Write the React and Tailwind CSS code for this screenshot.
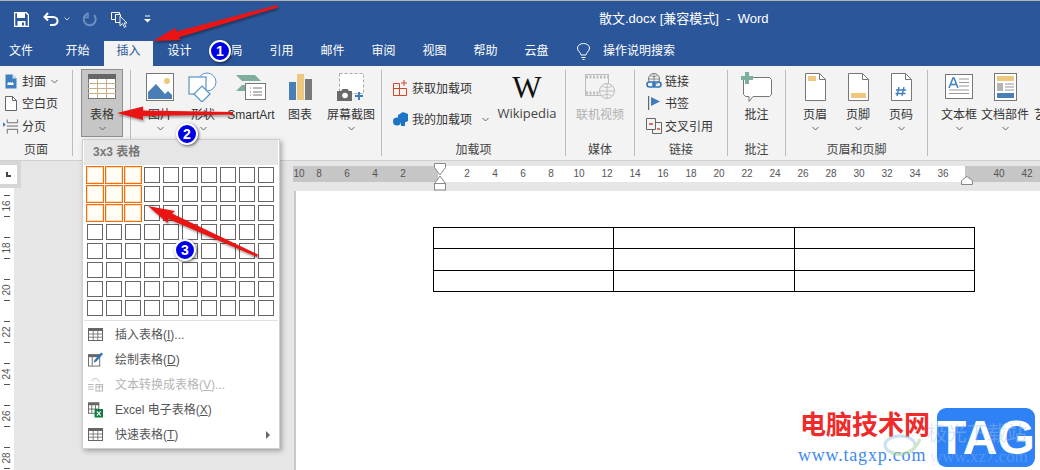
import React from "react";

const FONT = "font-['Liberation_Sans','Noto_Sans_CJK_SC',sans-serif]";

const Chev = ({ color = "#666" }) => (
  <svg width="7" height="5" viewBox="0 0 7 5"><path d="M0.5 1 L3.5 4 L6.5 1" fill="none" stroke={color} strokeWidth="1" /></svg>
);

const GridIcon = ({ w = 15, h = 13, color = "#666" }) => (
  <svg width={w} height={h} viewBox="0 0 15 13">
    <rect x="0.5" y="0.5" width="14" height="12" fill="#fff" stroke={color} />
    <rect x="0" y="0" width="15" height="3" fill={color} />
    <path d="M5.2 3v9M9.8 3v9M0 6h15M0 9.2h15" stroke={color} strokeWidth="0.8" />
  </svg>
);

const icons = {
  cover: (
    <svg width="12" height="15" viewBox="0 0 12 15"><path d="M.5.5h7l4 4v10h-11z" fill="#3f7fbf" /><path d="M7.5.5v4h4z" fill="#cfe0f0" /><path d="M2.5 9l1-1 1 1 1-1 1 1 1-1 1 1v2h-6z" fill="#fff" /></svg>
  ),
  blank: (
    <svg width="12" height="15" viewBox="0 0 12 15"><path d="M.5.5h7l4 4v10h-11z" fill="#fff" stroke="#666" /><path d="M7.5.5v4h4" fill="none" stroke="#666" /></svg>
  ),
  pagebreak: (
    <svg width="17" height="15" viewBox="0 0 17 15"><path d="M0 3l3 2.5L0 8z" fill="#3f7fbf" /><path d="M4.500 0v3.500h11V0M4.500 15v-4.500h11V15" fill="none" stroke="#666" /><path d="M4 7h12" stroke="#666" /></svg>
  ),
  table: (
    <svg width="28" height="25" viewBox="0 0 28 25"><rect x=".5" y=".5" width="27" height="24" fill="#fff" stroke="#777" /><rect width="28" height="5" fill="#666" /><path d="M9.500 5v19M18.500 5v19M0 9.500h28M0 14.500h28M0 19.500h28" stroke="#c9b08a" strokeWidth="1" /></svg>
  ),
  picture: (
    <svg width="28" height="28" viewBox="0 0 28 28"><rect x=".5" y=".5" width="27" height="27" fill="#fff" stroke="#777" /><circle cx="21" cy="8" r="3" fill="#edc87e" /><path d="M2 26V19l8-8 9 10 3-3 4 4v4z" fill="#4a7fb5" /></svg>
  ),
  shapes: (
    <svg width="30" height="30" viewBox="0 0 30 30"><circle cx="19" cy="10" r="9" fill="#fff" stroke="#5b93c7" /><rect x="1" y="5" width="17" height="17" fill="#fff" stroke="#5b93c7" strokeWidth="1.200" /><path d="M14 14l8 8-8 8-8-8z" fill="#fff" stroke="#5b93c7" strokeWidth="1.200" /></svg>
  ),
  smartart: (
    <svg width="30" height="26" viewBox="0 0 30 26"><path d="M0 1h19l6 6h-19z M6 11h6v6H0z" fill="#7fae9e" /><rect x="9.500" y="9.500" width="20" height="16" fill="#fff" stroke="#777" /><path d="M14 14h1M17 14h9M14 18h1M17 18h9M14 21h1M17 21h9" stroke="#777" /></svg>
  ),
  chart: (
    <svg width="23" height="26" viewBox="0 0 23 26"><rect y="8" width="7" height="18" fill="#4a7fb5" /><rect x="8" width="7" height="26" fill="#edc87e" /><rect x="16" y="5" width="7" height="21" fill="#7a7a7a" /></svg>
  ),
  screenshot: (
    <svg width="28" height="28" viewBox="0 0 28 28"><rect x="2.500" y=".5" width="24" height="20" fill="#fff" stroke="#aaa" strokeDasharray="3 2" /><path d="M0 18h4l1.500-2h5l1.500 2h3v10H0z" fill="#6a6a6a" /><circle cx="8" cy="22.500" r="2.800" fill="#fff" /><path d="M22 19v8M18 23h8" stroke="#3f7fbf" strokeWidth="2" /></svg>
  ),
  addin: (
    <svg width="16" height="16" viewBox="0 0 16 16" fill="none" stroke="#d24726"><path d="M.5 3.500h6v12h-6zM6.500 8.500h7v7h-7zM.5 8.500h6M11 0v6M8 3h6" /></svg>
  ),
  myaddin: (
    <svg width="15" height="14" viewBox="0 0 15 14"><path d="M5 3l5-3 5 2v7l-4 2-6-3z" fill="#1e74c4" /><circle cx="4" cy="9.500" r="4" fill="#1e74c4" /><path d="M8 8l4 2v4H8z" fill="#1e74c4" /></svg>
  ),
  video: (
    <svg width="30" height="25" viewBox="0 0 30 25"><rect x=".5" y=".5" width="23" height="21" fill="#f3f3f3" stroke="#bdbdbd" /><path d="M1 3h22M1 19h22" stroke="#bdbdbd" strokeWidth="3" strokeDasharray="2 1.500" /><circle cx="22" cy="17" r="7.500" fill="#f3f3f3" stroke="#bdbdbd" /><path d="M14.500 17h15M22 9.500v15M17 12c3 2 7 2 10 0M17 22c3-2 7-2 10 0" fill="none" stroke="#bdbdbd" /></svg>
  ),
  link: (
    <svg width="16" height="16" viewBox="0 0 16 16" fill="none"><circle cx="8" cy="6" r="5.500" stroke="#777" /><path d="M2.500 6h11M8 .5v11M4.500 2.500c2 1.500 5 1.500 7 0" stroke="#777" strokeWidth=".8" /><rect x="1" y="9" width="8" height="5" rx="2.500" stroke="#2f75b5" strokeWidth="1.600" fill="#f3f3f3" /><rect x="7" y="9" width="8" height="5" rx="2.500" stroke="#2f75b5" strokeWidth="1.600" /></svg>
  ),
  bookmark: (
    <svg width="12" height="14" viewBox="0 0 12 14"><path d="M.5 0v14" stroke="#666" strokeWidth="1.400" /><path d="M3 1l9 4.500L3 10z" fill="#3f7fbf" /></svg>
  ),
  cross: (
    <svg width="16" height="16" viewBox="0 0 16 16" fill="none"><path d="M.5.500h9v11h-9z" stroke="#666" /><path d="M9.500 4.500h6v11h-9v-4" stroke="#666" /><path d="M3 6h4" stroke="#d24726" strokeWidth="1.500" /><path d="M11 11h3" stroke="#d24726" strokeWidth="1.500" /></svg>
  ),
  comment: (
    <svg width="31" height="30" viewBox="0 0 31 30"><path d="M4.500 5.500h24l2 2v15l-2 2H12l-4 5v-5H4.500l-2-2v-15z" fill="#fff" stroke="#777" /><path d="M4 0h4v4h4v4H8v4H4V8H0V4h4z" fill="#7fae9e" /></svg>
  ),
  header: (
    <svg width="21" height="28" viewBox="0 0 21 28"><path d="M.5.500h14l6 6v21H.5z" fill="#fff" stroke="#777" /><path d="M14.500.500v6h6" fill="none" stroke="#777" /><rect x="3" y="3" width="8" height="5" fill="#edc87e" /></svg>
  ),
  footer: (
    <svg width="21" height="28" viewBox="0 0 21 28"><path d="M.5.500h14l6 6v21H.5z" fill="#fff" stroke="#777" /><path d="M14.500.500v6h6" fill="none" stroke="#777" /><rect x="3" y="20" width="15" height="5" fill="#edc87e" /></svg>
  ),
  pagenum: (
    <svg width="21" height="28" viewBox="0 0 21 28"><path d="M.5.500h14l6 6v21H.5z" fill="#fff" stroke="#777" /><path d="M14.500.500v6h6" fill="none" stroke="#777" /><path d="M8 14l-2 9M13 14l-2 9M5 17h10M4.500 20.500h10" stroke="#3f7fbf" strokeWidth="1.300" /></svg>
  ),
  textbox: (
    <svg width="28" height="25" viewBox="0 0 28 25"><rect x=".5" y=".5" width="27" height="24" fill="#fff" stroke="#777" /><path d="M4 14l4-10h1l4 10M5.500 10.500h6" fill="none" stroke="#3f7fbf" strokeWidth="1.500" /><path d="M14 5h10M14 8.500h10M14 12h10M4 16h20M4 19.500h20" stroke="#999" /></svg>
  ),
  parts: (
    <svg width="23" height="28" viewBox="0 0 23 28"><rect x=".5" y=".5" width="22" height="27" fill="#fff" stroke="#777" /><rect x="3" y="3" width="17" height="5" fill="#edc87e" /><rect x="3" y="10" width="6" height="8" fill="#b5b5b5" /><path d="M11 11h9M11 14h9M11 17h9" stroke="#999" /><rect x="3" y="20" width="17" height="5" fill="#4a7fb5" /></svg>
  ),
};

const Big = ({ w, icon, label, chev = true, ml = 0 }) => (
  <div className="flex flex-col items-center shrink-0" style={{ width: w, marginLeft: ml }}>
    <div className="h-[33px] flex items-center justify-center">{icon}</div>
    <div className="mt-[3px] h-[18px] leading-[18px] whitespace-nowrap">{label}</div>
    {chev && <div className="h-[9px] flex items-center"><Chev /></div>}
  </div>
);

const Group = ({ w, label, children, last, className = "" }) => (
  <div className={`shrink-0 h-full flex flex-col ${last ? "" : "border-r border-[#bdbdbd]"}`} style={{ width: w }}>
    <div className={`h-[71px] flex ${className}`}>{children}</div>
    <div className="h-[15px] leading-[19px] text-center text-[#444]">{label}</div>
  </div>
);

const Row = ({ icon, label, extra }) => (
  <div className="flex items-center h-[22px] whitespace-nowrap">
    <span className="w-[16px] flex justify-center">{icon}</span>
    <span className="ml-[3px] mt-[2px]">{label}</span>
    {extra}
  </div>
);

const topTabs = ["开始", "插入", "设计", "布局", "引用", "邮件", "审阅", "视图", "帮助", "云盘"];

const MenuItem = ({ icon, children, disabled, arrow }) => (
  <div className={`flex items-center h-[25px] pl-[5px] pr-[6px] ${disabled ? "text-[#b5b5b5]" : "text-[#555]"}`}>
    <span className="w-[15px] flex justify-center">{icon}</span>
    <span className="ml-[12px] flex-1 whitespace-nowrap">{children}</span>
    {arrow && <span className="w-0 h-0 border-y-[4px] border-y-transparent border-l-[4px] border-l-[#666] mr-[3px]" />}
  </div>
);

const Badge = ({ n, cls }) => (
  <div className={`absolute w-[22px] h-[22px] rounded-full bg-[#0000e6] border-[2px] border-white shadow-[1px_1px_3px_rgba(0,0,0,0.6)] text-white text-[14px] leading-[18px] text-center font-bold ${cls}`}>{n}</div>
);

const Num = ({ n, w = "w-[28px]" }) => (
  <span className={`${w} shrink-0 text-center`}>{n}</span>
);

export default function App() {
  return (
    <div className={`relative w-[1040px] h-[470px] overflow-hidden bg-[#e6e6e6] text-[12px] text-[#333] ${FONT}`}>
      <div className="h-px bg-[#b5b5b5]" />
      {/* title bar */}
      <div className="h-[40px] bg-[#2b579a] flex items-center text-white relative">
        <div className="flex items-center pl-[14px] -mt-[4px]">
          <svg width="15" height="15" viewBox="0 0 15 15"><path d="M.5.500h11.500l2.500 2.500v11.500H.5z" fill="none" stroke="#fff" strokeWidth="1.500" /><rect x="3" y="1" width="8" height="5" fill="#fff" /><rect x="3.500" y="9" width="8" height="5.500" fill="#fff" /><rect x="8" y="10.500" width="2" height="3" fill="#2b579a" /></svg>
          <svg className="ml-[14px]" width="16" height="14" viewBox="0 0 16 14" fill="none"><path d="M5 1L1.500 5 5 8.500" stroke="#fff" strokeWidth="2" /><path d="M2 5h8c6 0 6 8 0 8H7" stroke="#fff" strokeWidth="2" /></svg>
          <span className="ml-[5px]"><svg width="6" height="4" viewBox="0 0 6 4"><path d="M.5.500L3 3 5.500.500" fill="none" stroke="#c8d4e6" /></svg></span>
          <svg className="ml-[13px]" width="15" height="15" viewBox="0 0 15 15" fill="none"><path d="M11 3a6 6 0 1 1-6-1.500" stroke="#6f8fbf" strokeWidth="2" /><path d="M5 .5v5H0" stroke="#6f8fbf" strokeWidth="1.500" /></svg>
          <svg className="ml-[13px]" width="17" height="17" viewBox="0 0 17 17" fill="none"><path d="M.5 1.500h8v7h-8z" stroke="#fff" /><path d="M4.500 3.500h5v8h-5z" stroke="#fff" fill="#2b579a" /><path d="M9 5v10l2.500-2.500 2 4 1.500-1-2-3.500h3z" fill="#2b579a" stroke="#fff" strokeWidth=".9" /></svg>
          <svg className="ml-[16px]" width="7" height="8" viewBox="0 0 7 8"><path d="M1 1h5" stroke="#fff" /><path d="M0 4h7L3.500 7.500z" fill="#fff" /></svg>
        </div>
        <div className="absolute left-[599px] top-[9px] text-[13px] leading-[18px] whitespace-nowrap">散文.docx [兼容模式]&nbsp; -&nbsp; Word</div>
      </div>
      {/* tabs */}
      <div className="h-[25px] bg-[#2b579a] flex text-white leading-[21px]">
        <div className="w-[42px] text-center">文件</div>
        <div className="flex gap-[2px] ml-[11px]">
          {topTabs.map((t, i) => (
            <div key={t} className={`w-[49px] text-center ${i === 1 ? "bg-[#f3f3f3] text-[#2b579a]" : ""}`}>{t}</div>
          ))}
        </div>
        <div className="ml-[16px] flex items-center pb-[4px]">
          <svg width="13" height="17" viewBox="0 0 13 17" fill="none" stroke="#fff"><path d="M4 12c0-2.500-3.500-3.500-3.500-7a6 4.500 0 0 1 12 0c0 3.500-3.500 4.500-3.500 7z" /><path d="M4.500 14.500h4M5.500 16.500h2" /></svg>
          <span className="ml-[13px]">操作说明搜索</span>
        </div>
      </div>
      {/* ribbon */}
      <div className="h-[95px] pt-[4px] pb-[4px] bg-[#f3f3f3] border-b border-[#d0d0d0] flex overflow-hidden">
        <Group w={73} label="页面" className="flex-col pl-[3px]">
          <Row icon={icons.cover} label="封面" extra={<span className="ml-[5px]"><Chev /></span>} />
          <Row icon={icons.blank} label="空白页" />
          <div className="mt-px"><Row icon={icons.pagebreak} label="分页" /></div>
        </Group>
        <Group w={58} label="" className="pl-[8px]">
          <div className="w-[42px] h-[68px] -mt-px bg-[#c6c6c6] border border-[#8e8e8e] flex flex-col items-center">
            <div className="h-[33px] flex items-center">{icons.table}</div>
            <div className="mt-[3px] h-[18px] leading-[18px]">表格</div>
            <div className="h-[9px] flex items-center"><Chev /></div>
          </div>
        </Group>
        <Group w={251} label="" className="pl-[8px] gap-[1px]">
          <Big w={42} icon={icons.picture} label="图片" />
          <Big w={42} icon={icons.shapes} label="形状" />
          <Big w={52} icon={icons.smartart} label="SmartArt" chev={false} />
          <Big w={44} icon={icons.chart} label="图表" chev={false} />
          <Big w={56} icon={icons.screenshot} label="屏幕截图" />
        </Group>
        <Group w={184} label="加载项" className="pl-[11px]">
          <div className="w-[97px] pt-[8px] flex flex-col gap-[11px]">
            <div className="h-[20px] flex items-center whitespace-nowrap">{icons.addin}<span className="ml-[3px] mt-[2px]">获取加载项</span></div>
            <div className="h-[20px] flex items-center whitespace-nowrap">{icons.myaddin}<span className="ml-[4px] mt-[2px]">我的加载项</span><span className="ml-[10px]"><Chev /></span></div>
          </div>
          <div className="ml-[7px] w-[60px] flex flex-col items-center">
            <div className="h-[33px] flex items-center font-['Liberation_Serif',serif] text-[31px] leading-[34px] pt-[2px] text-[#111]">W</div>
            <div className="mt-[1px] h-[18px] leading-[18px] text-[13px] font-['Open_Sans',sans-serif] text-[#444]">Wikipedia</div>
          </div>
        </Group>
        <Group w={69} label="媒体" className="justify-center">
          <Big w={60} icon={icons.video} label={<span className="text-[#b0b0b0]">联机视频</span>} chev={false} />
        </Group>
        <Group w={93} label="链接" className="flex-col pl-[11px]">
          <Row icon={icons.link} label="链接" />
          <Row icon={icons.bookmark} label="书签" />
          <div className="mt-px"><Row icon={icons.cross} label="交叉引用" /></div>
        </Group>
        <Group w={58} label="批注" className="justify-center">
          <Big w={50} icon={icons.comment} label="批注" chev={false} />
        </Group>
        <Group w={142} label="页眉和页脚" className="pl-[8px] gap-[1px]">
          <Big w={42} icon={icons.header} label="页眉" />
          <Big w={42} icon={icons.footer} label="页脚" />
          <Big w={42} icon={icons.pagenum} label="页码" />
        </Group>
        <Group w={130} label="" last className="pl-[10px]">
          <Big w={42} icon={icons.textbox} label="文本框" />
          <Big w={50} icon={icons.parts} label="文档部件" />
          <Big w={40} icon={<span />} label="艺术字" chev={false} ml={2} />
        </Group>
      </div>
      {/* document area */}
      <div className="flex h-[309px]">
        <div className="w-[21px] shrink-0 flex flex-col">
          <div className="h-[27px] bg-[#d6d6d6] pt-[4px]">
            <div className="w-[17px] h-[19px] bg-white flex items-center justify-center">
              <div className="w-[5px] h-[5px] border-l-2 border-b-2 border-[#444]" />
            </div>
          </div>
          <div className="w-[14px] flex-1 bg-white pt-[7px] text-[10px] text-[#555] overflow-hidden">
            {[16, 18, 20, 22, 24, 26, 28].map((n) => (
              <div key={n} className="h-[42px] flex flex-col items-center">
                <div className="w-[6px] h-px bg-[#555] shrink-0" />
                <div className="h-[20px] flex items-center -rotate-90 leading-none shrink-0">{n}</div>
                <div className="w-[6px] h-px bg-[#555] shrink-0" />
              </div>
            ))}
          </div>
        </div>
        <div className="flex-1 pl-[272px] pt-[5px] flex flex-col min-w-0">
          <div className="h-[16px] flex text-[10px] text-[#555] leading-[16px] shrink-0 overflow-hidden">
            <div className="w-[145px] shrink-0 bg-[#c6c6c6] flex">
              <Num n={10} w="w-[12px]" />
              {[8, 6, 4, 2].map((n) => <Num key={n} n={n} />)}
            </div>
            <div className="w-[527px] shrink-0 bg-white flex pl-[15px]">
              {[2, 4, 6, 8, 10, 12, 14, 16, 18, 20, 22, 24, 26, 28, 30, 32, 34, 36].map((n) => <Num key={n} n={n} />)}
            </div>
            <div className="flex-1 bg-[#c6c6c6] flex pl-[20px]">
              <Num n={40} />
              <Num n={42} />
            </div>
          </div>
          <div className="mt-[9px] ml-px flex-1 bg-white border-l-2 border-[#c8c8c8] pl-[137px] pt-[36px]">
            <table className="table-fixed border-collapse w-[542px]">
              <tbody>
                {["h-[21px]", "h-[22px]", "h-[21px]"].map((h, r) => (
                  <tr key={r} className={h}>
                    {[0, 1, 2].map((c) => <td key={c} className="border border-black" />)}
                  </tr>
                ))}
              </tbody>
            </table>
          </div>
        </div>
      </div>

      {/* ruler markers */}
      <svg className="absolute left-[434px] top-[163px]" width="12" height="28" viewBox="0 0 12 28">
        <path d="M.5.500h11v4L6 12 .5 4.500z" fill="#fff" stroke="#888" />
        <path d="M6 13l5.500 7.500H.5z" fill="#fff" stroke="#888" />
        <rect x=".5" y="20.500" width="11" height="6.500" fill="#fff" stroke="#888" />
      </svg>
      <svg className="absolute left-[961px] top-[176px]" width="12" height="9" viewBox="0 0 12 9">
        <path d="M6 .5l5.500 4v4H.5v-4z" fill="#fff" stroke="#888" />
      </svg>

      {/* table dropdown */}
      <div className="absolute left-[82px] top-[139px] w-[198px] h-[310px] bg-white border border-[#d0d0d0] shadow-[2px_2px_5px_rgba(0,0,0,0.3)]">
        <div className="h-[25px] mx-px bg-[#e6e6e6] pl-[9px] leading-[25px] font-bold text-[#777]">3x3 表格</div>
        <div className="pl-[3px] pt-px grid grid-cols-[repeat(10,19px)] auto-rows-[19px]">
          {Array.from({ length: 80 }).map((_, i) => {
            const on = i % 10 < 3 && i < 30;
            return (
              <div key={i}>
                <div className={on ? "w-[18px] h-[18px] border border-[#f26b1d] bg-[#fffdf5] shadow-[inset_0_0_0_1px_#fbe0a8]" : "ml-px mt-px w-[16px] h-[16px] border border-[#666]"} />
              </div>
            );
          })}
        </div>
        <div className="mt-[2px] mx-px h-px bg-[#e0e0e0]" />
        <div className="pt-[1px]">
          <MenuItem icon={<GridIcon />}>插入表格(<u>I</u>)...</MenuItem>
          <MenuItem icon={
            <svg width="16" height="15" viewBox="0 0 16 15"><rect x=".5" y="2.500" width="12" height="12" fill="#fff" stroke="#666" /><rect y="2" width="13" height="3" fill="#666" /><path d="M4.500 5v9" stroke="#666" /><path d="M6 11l1-3 7-8 2 1.500-7 8z" fill="#2f75b5" /></svg>
          }>绘制表格(<u>D</u>)</MenuItem>
          <MenuItem disabled icon={
            <svg width="16" height="15" viewBox="0 0 16 15" fill="none" stroke="#b5b5b5"><path d="M0 7.500h6M0 10h6M0 12.500h6" /><rect x="8.500" y="7.500" width="7" height="7" /><path d="M8.500 10h7M12 7.500v7M4 4c1-4 7-4 8 1" /></svg>
          }>文本转换成表格(<u>V</u>)...</MenuItem>
          <MenuItem icon={
            <svg width="16" height="16" viewBox="0 0 16 16"><rect x=".5" y=".5" width="11" height="11" fill="#fff" stroke="#666" /><rect width="12" height="3" fill="#666" /><path d="M4 3v8M8 3v8M0 7h11" stroke="#666" /><rect x="7" y="7" width="9" height="9" fill="#107c41" /><path d="M9.500 9.500l4 4.500M13.500 9.500l-4 4.500" stroke="#fff" strokeWidth="1.200" /></svg>
          }>Excel 电子表格(<u>X</u>)</MenuItem>
          <MenuItem arrow icon={<GridIcon />}>快速表格(<u>T</u>)</MenuItem>
        </div>
      </div>

      {/* annotations */}
      <svg className="absolute left-0 top-0 pointer-events-none drop-shadow-[1px_2px_1px_rgba(0,0,0,0.35)]" width="1040" height="470" viewBox="0 0 1040 470">
        <path d="M153 41L175 28 176.500 31.500 277 5 278 7.500 178.500 37.500 181 40z" fill="#ea1414" />
        <path d="M117 113L143 106.500 143 110.500 233 112 233 114.500 143 116 143 120z" fill="#ea1414" />
        <path d="M148 206L175 211 172 213.500 258 254.500 257 257 168.500 219 167.500 223z" fill="#ea1414" />
      </svg>
      <Badge n="1" cls="left-[209px] top-[40px]" />
      <Badge n="2" cls="left-[176px] top-[123px]" />
      <Badge n="3" cls="left-[174px] top-[239px]" />

      {/* watermark */}
      <div className="absolute left-[800px] top-[410px] w-[130px] text-center text-[26px] leading-[30px] font-bold text-[#f02a2a] whitespace-nowrap">电脑技术网</div>
      <div className="absolute left-[798px] top-[445px] font-['Liberation_Serif',serif] text-[18px] leading-[20px] text-[#3f8af0] whitespace-nowrap tracking-[0.8px]">www.tagxp.com</div>
      <div className="absolute left-[937px] top-[408px] w-[98px] h-[59px] rounded-[9px] bg-[#2f82f5] text-white text-center font-bold text-[48px] leading-[59px] font-['Liberation_Sans',sans-serif]">TAG</div>
      <svg className="absolute left-[882px] top-[433px] opacity-50" width="40" height="25" viewBox="0 0 40 25" fill="none">
        <ellipse cx="18" cy="12" rx="15" ry="9" stroke="#9cc0e0" strokeWidth="3" />
        <path d="M10 20c10 4 24-2 28-14" stroke="#9ccf8a" strokeWidth="3" />
      </svg>
      <div className="absolute left-[927px] top-[422px] w-[100px] text-[20px] leading-[24px] text-[#a8c4e0] opacity-40 whitespace-nowrap">极光下载站</div>
      <div className="absolute left-[930px] top-[447px] text-[17px] leading-[20px] text-[#a8c4e0] opacity-30 whitespace-nowrap font-['Liberation_Serif',serif]">www.xz7.com</div>
    </div>
  );
}
